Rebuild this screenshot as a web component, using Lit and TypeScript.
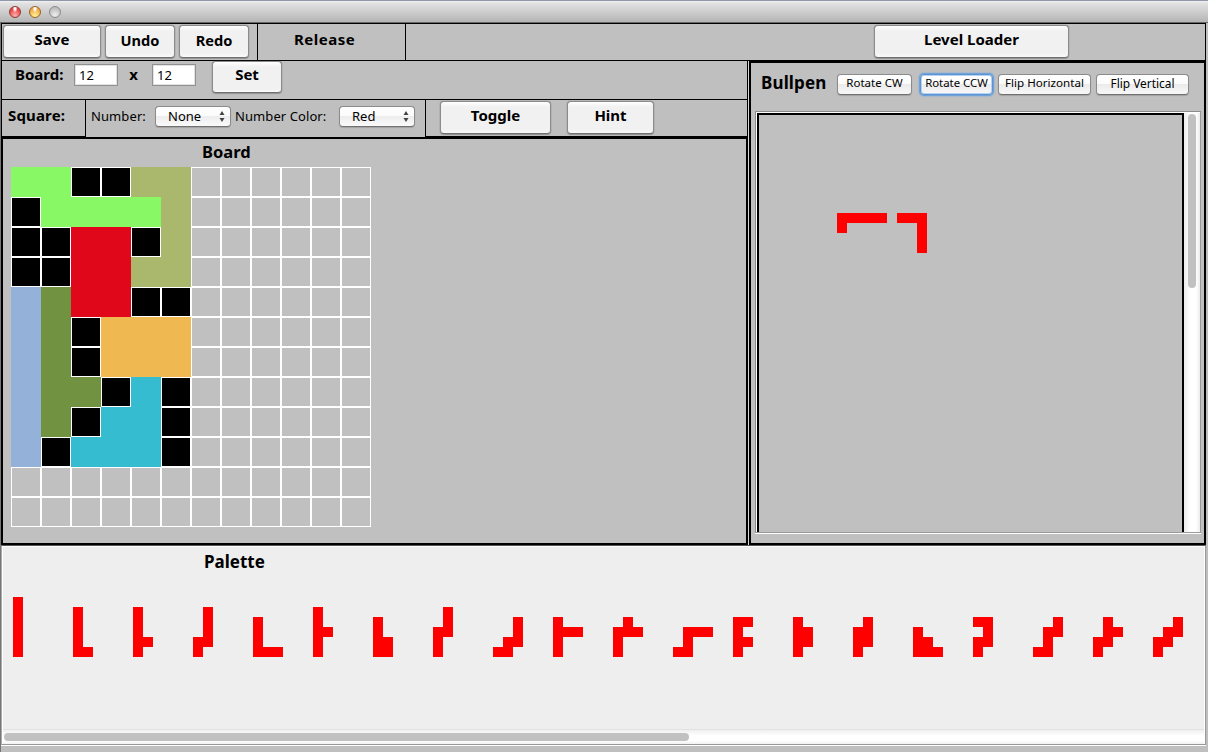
import { LitElement, html, svg, css } from "lit";
import { customElement, property } from "lit/decorators.js";

const PALETTE = [
  "X,X,X,X,X,X",
  "X,X,X,X,XX",
  "X,X,X,XX,X",
  ".X,.X,.X,XX,X",
  "X,X,X,XXX",
  "X,X,XX,X,X",
  "X,X,XX,XX",
  ".X,.X,XX,X,X",
  "..X,..X,.XX,XX",
  "X,XXX,X,X",
  ".X,XXX,X,X",
  ".XXX,.X,XX",
  "XX,X,XX,X",
  "X,XX,XX,X",
  ".X,XX,XX,X",
  "X,XX,XXX",
  "XX,.X,XX,X",
  "..X,.XX,.X,XX",
  ".X,.XX,XX,X",
  "..X,.XX,XX,X",
];

const BULLPEN = ["XXXXX,X", "XXX,..X,..X,..X"];

const BOARD = [
  "GG##OO......",
  "#GGGGO......",
  "##RR#O......",
  "##RROO......",
  "BDRR##......",
  "BD#YYY......",
  "BD#YYY......",
  "BDD#C#......",
  "BD#CC#......",
  "B#CCC#......",
  "............",
  "............",
];

const CELL_CLASS: Record<string, string> = {
  G: "lime", O: "olive", R: "red", B: "blue", D: "moss", Y: "amber", C: "cyan", "#": "off", ".": "free",
};

@customElement("hexo-piece")
export class HexoPiece extends LitElement {
  @property() shape = "";

  static styles = css`
    :host { display: block; line-height: 0; }
    svg { display: block; shape-rendering: crispEdges; fill: #ff0000; }
  `;

  render() {
    const rows = this.shape.split(",");
    const w = Math.max(...rows.map((r) => r.length)) * 10;
    const h = rows.length * 10;
    return html`<svg width=${w} height=${h} viewBox="0 0 ${w} ${h}">
      ${rows.flatMap((row, y) =>
        [...row].map((c, x) => (c === "X" ? svg`<rect x=${x * 10} y=${y * 10} width="10" height="10"></rect>` : null))
      )}
    </svg>`;
  }
}

@customElement("hexo-board")
export class HexoBoard extends LitElement {
  static styles = css`
    :host { display: grid; grid-template-columns: repeat(12, 30px); grid-auto-rows: 30px; width: 360px; }
    .cell { box-sizing: border-box; }
    .free, .off { border: 1px solid #fff; }
    .off { background: #000; }
    .lime { background: #88f865; }
    .olive { background: #a9b86d; }
    .red { background: #e0071a; }
    .blue { background: #93b1d9; }
    .moss { background: #709241; }
    .amber { background: #f0b850; }
    .cyan { background: #36bcd0; }
  `;

  render() {
    return BOARD.flatMap((row) => [...row].map((c) => html`<div class="cell ${CELL_CLASS[c]}"></div>`));
  }
}

@customElement("app-root")
export class AppRoot extends LitElement {
  static styles = css`
    :host {
      display: block;
      width: 1208px;
      height: 752px;
      overflow: hidden;
      font-family: "Noto Sans", "Open Sans", sans-serif;
      color: #000;
      background: #bfbfbf;
    }
    * { box-sizing: border-box; }
    .window { display: flex; flex-direction: column; height: 752px; border-left: 1px solid #777; white-space: nowrap; }
    .titlebar {
      flex: none; height: 23px; display: flex; align-items: center; gap: 8px; padding: 1px 0 0 9px; margin-left: -1px;
      border-top: 1px solid #8f97a8; border-bottom: 1px solid #666;
      background: linear-gradient(#f2f2f2 0, #e2e2e2 2px, #b5b5b5 100%);
    }
    .light { width: 12px; height: 12px; border-radius: 50%; border: 1px solid #777; }
    .close { border-color: #8e3a37; background: radial-gradient(ellipse at 50% 15%, #fff 0 10%, transparent 35%), radial-gradient(circle at 50% 85%, #ffb0a8, #e8484a 65%); }
    .minimise { border-color: #96632a; background: radial-gradient(ellipse at 50% 15%, #fff 0 10%, transparent 35%), radial-gradient(circle at 50% 90%, #fff69a, #f0a744 70%); }
    .zoom { border-color: #8a8a8a; background: radial-gradient(circle at 50% 80%, #eee, #bcbcbc 75%); }

    .toolbar {
      flex: none; width: 1205px; height: 38px; display: flex; background: #c0c0c0;
      border: 1px solid #000;
    }
    .history { width: 256px; display: flex; gap: 4px; padding: 1px 0 0 1px; border-right: 1px solid #000; }
    .release { width: 148px; border-right: 1px solid #000; padding: 4px 0 0 36px; letter-spacing: 0.5px; }
    .loader { flex: 1; padding: 1px 0 0 468px; }

    .strong { font-weight: 700; font-size: 15px; line-height: 22px; }
    .big, .small, .select {
      font-family: inherit; color: #000; text-align: center; padding: 0; flex: none; display: block;
      border: 1px solid #8b8b8b; border-bottom-color: #707070; border-radius: 4px;
    }
    .big {
      height: 33px; font-weight: 700; font-size: 15px; line-height: 22px; padding: 2px 0 7px;
      background: linear-gradient(#fff 0, #f1f1f1 5px, #f1f1f1 27px, #fafafa 100%);
      box-shadow: 0 0 1px 0 #666, 0 1px 1px #7778;
    }
    .low { padding: 3px 0 6px; font-size: 14.6px; }
    .save { width: 98px; }
    .step { width: 70px; }
    .load { width: 195px; }
    .toggle { width: 111px; }
    .hint { width: 87px; }

    .middle { flex: none; display: flex; width: 1205px; height: 484px; }
    .left { width: 747px; flex: none; display: flex; flex-direction: column; }
    .size {
      height: 39px; flex: none; display: flex; border: solid #000; border-width: 0 1px 1px; padding-left: 13px;
    }
    .size .strong { padding-top: 2px; }
    .size-name { width: 59px; }
    .times { width: 34px; padding-right: 3px; text-align: center; }
    .field {
      width: 44px; height: 22px; margin-top: 3px; border: 1px solid #919191; box-shadow: inset 0 0 0 1px #e2e2e2;
      background: #fff; font-size: 13px; line-height: 20px; padding-left: 4px;
    }
    .set { margin-left: 16px; height: 32px; padding: 1px 0 7px; }
    .square { height: 37px; flex: none; display: flex; border: solid #000; border-width: 0 1px; }
    .square-name { width: 84px; border: solid #000; border-width: 0 1px 1px 0; padding: 4px 0 0 6px; letter-spacing: 0.15px; }
    .number { width: 340px; border-right: 1px solid #000; display: flex; padding-left: 5px; }
    .caption { font-size: 13px; line-height: 20px; padding-top: 6px; }
    .caption-number { width: 64px; letter-spacing: 0.1px; }
    .caption-color { width: 108px; padding-left: 4px; letter-spacing: 0.08px; }
    .select {
      width: 76px; height: 21px; margin-top: 6px; font-size: 13px; line-height: 19px; text-align: left;
      display: flex; justify-content: space-between; padding: 0 5px 0 12px;
      background: linear-gradient(#fff, #fbfbfb 45%, #ededed 50%, #fafafa);
      box-shadow: 0 1px 1px #8888;
    }
    .arrows { width: 6px; height: 12px; margin-top: 4px; fill: #444; display: block; }
    .actions { flex: 1; border-bottom: 1px solid #000; display: flex; gap: 16px; padding: 1px 0 0 14px; }
    .board-area { flex: 1; border: 2px solid #000; background: #c0c0c0; padding-left: 8px; }
    .title { font-weight: 700; font-size: 17px; line-height: 24px; }
    .board-title { height: 28px; padding: 1px 0 0 191px; font-size: 16.5px; }

    .bullpen { margin-left: 1px; width: 457px; border: 2px solid #000; background: #c0c0c0; display: flex; flex-direction: column; padding: 0 3px 10px 4px; box-shadow: -1px 0 0 #d8d8d8; }
    .pen-tools { height: 48px; flex: none; display: flex; padding: 8px 0 0 6px; }
    .pen-title { width: 76px; letter-spacing: 0.15px; }
    .small {
      height: 21px; margin-top: 3px; font-size: 12px; line-height: 16px; padding-bottom: 3px;
      background: linear-gradient(#fff, #fbfbfb 45%, #ebebeb 50%, #f8f8f8);
      box-shadow: 0 1px 1px #8888;
    }
    .cw { width: 75px; margin-right: 8px; font-size: 11.5px; }
    .ccw { width: 73px; margin-right: 5px; font-size: 11.4px; border-color: #5e93cf; box-shadow: 0 0 0 1px #6ea2dc, 0 0 2px 1px #6ea2dc, inset 0 0 0 1px #b4d2f3; }
    .fh { width: 93px; margin-right: 5px; font-size: 11.6px; }
    .fv { width: 93px; font-size: 11.9px; }
    .pane {
      flex: 1; display: flex; border: 1px solid #8c8c8c; border-right-color: #999; border-bottom-color: #999; box-shadow: 0 1px 0 #fff;
      background: #fff; padding: 1px 0 0 1px;
    }
    .canvas { width: 427px; background: #c0c0c0; border: 2px solid #000; border-bottom: 0; padding: 98px 0 0 78px; display: flex; gap: 10px; align-items: flex-start; }
    .vbar { flex: 1; background: linear-gradient(90deg, #ececec, #fff 40%, #fff 75%, #ededed); padding: 1px 0 0 4px; }
    .vthumb { width: 8px; height: 174px; border-radius: 4px; background: #c1c1c1; }

    .palette {
      flex: none; width: 1205px; height: 200px; display: flex; flex-direction: column; background: #eee;
      border: 1px solid #999; border-top-color: #555; border-left-color: #aaa; box-shadow: inset 1px 1px 0 #fff, inset -1px 0 0 #fff, 0 1px 0 #fff;
    }
    .palette-title { height: 51px; padding: 4px 0 0 202px; }
    .pieces { display: grid; grid-template-columns: repeat(20, 60px); height: 60px; align-items: end; padding-left: 11px; width: 1203px; overflow: hidden; }
    .hbar { margin: auto 1px 0; height: 15px; border-top: 1px solid #e2e2e2; background: linear-gradient(#efefef, #fff 40%, #fff 75%, #f1f1f1); padding: 3px 0 0 1px; }
    .hthumb { width: 685px; height: 8px; border-radius: 4px; background: #c1c1c1; }
  `;

  private select(value: string) {
    return html`<div class="select">
      <span>${value}</span>
      <svg class="arrows" viewBox="0 0 6 12"><path d="M3 0 5.5 4H.5ZM3 11 .5 7h5Z"></path></svg>
    </div>`;
  }

  render() {
    return html`
      <div class="window">
        <div class="titlebar">
          <i class="light close"></i><i class="light minimise"></i><i class="light zoom"></i>
        </div>
        <div class="toolbar">
          <div class="history">
            <button class="big save">Save</button>
            <button class="big low step">Undo</button>
            <button class="big low step">Redo</button>
          </div>
          <div class="release strong">Release</div>
          <div class="loader"><button class="big load">Level Loader</button></div>
        </div>
        <div class="middle">
          <div class="left">
            <div class="size">
              <div class="strong size-name">Board:</div>
              <div class="field">12</div>
              <div class="strong times">x</div>
              <div class="field">12</div>
              <button class="big step set">Set</button>
            </div>
            <div class="square">
              <div class="strong square-name">Square:</div>
              <div class="number">
                <div class="caption caption-number">Number:</div>
                ${this.select("None")}
                <div class="caption caption-color">Number Color:</div>
                ${this.select("Red")}
              </div>
              <div class="actions">
                <button class="big toggle">Toggle</button>
                <button class="big hint">Hint</button>
              </div>
            </div>
            <div class="board-area">
              <div class="title board-title">Board</div>
              <hexo-board></hexo-board>
            </div>
          </div>
          <div class="bullpen">
            <div class="pen-tools">
              <div class="title pen-title">Bullpen</div>
              <button class="small cw">Rotate CW</button>
              <button class="small ccw">Rotate CCW</button>
              <button class="small fh">Flip Horizontal</button>
              <button class="small fv">Flip Vertical</button>
            </div>
            <div class="pane">
              <div class="canvas">${BULLPEN.map((s) => html`<hexo-piece shape=${s}></hexo-piece>`)}</div>
              <div class="vbar"><div class="vthumb"></div></div>
            </div>
          </div>
        </div>
        <div class="palette">
          <div class="title palette-title">Palette</div>
          <div class="pieces">${PALETTE.map((s) => html`<hexo-piece shape=${s}></hexo-piece>`)}</div>
          <div class="hbar"><div class="hthumb"></div></div>
        </div>
      </div>
    `;
  }
}
